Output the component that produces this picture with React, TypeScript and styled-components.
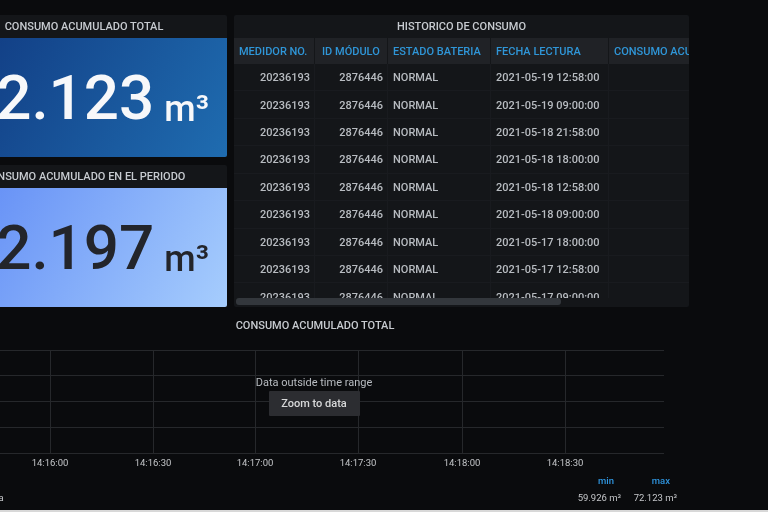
import styled, { createGlobalStyle } from "styled-components";

const GlobalStyle = createGlobalStyle`
  html, body {
    margin: 0;
    height: 100%;
    overflow: hidden;
    background: #d8d8d8;
  }
  body {
    font-family: Roboto, "Liberation Sans", sans-serif;
    color: #c4c6c9;
  }
`;

const Page = styled.div`
  width: 768px;
  height: 510px;
  overflow: hidden;
  background: #0a0b0d;
  filter: blur(0.5px);
`;

const Dashboard = styled.div`
  width: 748px;
  margin-left: -59px;
  padding-top: 15px;
  display: grid;
  grid-template-columns: 286px 455px;
  column-gap: 7px;
`;

const LeftColumn = styled.div`
  display: flex;
  flex-direction: column;
  gap: 8px;
`;

const Panel = styled.section`
  background: #141619;
  border-radius: 2px;
  overflow: hidden;
`;

const PanelTitle = styled.h2`
  margin: 0;
  height: 23px;
  line-height: 23px;
  text-align: center;
  font-size: 11px;
  font-weight: 500;
  color: #c7cbd0;
  white-space: nowrap;
`;

const Stat = styled.div<{ $light?: boolean }>`
  height: 119px;
  display: flex;
  align-items: center;
  justify-content: flex-end;
  padding-right: 18px;
  color: ${(p) => (p.$light ? "#23252b" : "#f7f8fa")};
  background: ${(p) =>
    p.$light
      ? "linear-gradient(120deg, #5d88f5, #a6cdfd)"
      : "linear-gradient(120deg, #10387f, #1f6cb0)"};
`;

const StatValue = styled.div`
  white-space: nowrap;
  font-size: 62px;
  font-weight: 500;
  line-height: 1;
`;

const Unit = styled.span`
  font-size: 36px;
  margin-left: 10px;
  vertical-align: -2px;
`;

const TablePanel = styled(Panel)`
  height: 292px;
  position: relative;
`;

const Table = styled.div`
  height: 260px;
  overflow: hidden;
`;

const Row = styled.div<{ $head?: boolean }>`
  display: grid;
  grid-template-columns: 81px 73px 103px 118px 140px;
  height: ${(p) => (p.$head ? "26px" : "27.43px")};
  background: ${(p) => (p.$head ? "#202226" : "transparent")};
  border-bottom: ${(p) => (p.$head ? "none" : "1px solid #191b1f")};
  box-sizing: border-box;
`;

const HeadCell = styled.div<{ $indent?: number }>`
  display: flex;
  align-items: center;
  padding-left: ${(p) => p.$indent ?? 5}px;
  font-size: 11px;
  font-weight: 500;
  color: #2f96d8;
  white-space: nowrap;
  overflow: hidden;
  border-right: 1px solid #141619;
`;

const Cell = styled.div<{ $right?: boolean }>`
  display: flex;
  align-items: center;
  justify-content: ${(p) => (p.$right ? "flex-end" : "flex-start")};
  padding: 1px ${(p) => (p.$right ? "4px" : "5px")} 0 5px;
  font-size: 11px;
  font-weight: 500;
  color: #b8bcc1;
  white-space: nowrap;
  border-right: 1px solid #191b1f;
`;

const ScrollThumb = styled.div`
  position: absolute;
  left: 2px;
  bottom: 2px;
  width: 325px;
  height: 7px;
  border-radius: 3px;
  background: #33373c;
`;

const ChartPanel = styled.section`
  grid-column: 1 / -1;
  margin-top: 7px;
`;

const ChartTitle = styled(PanelTitle)`
  margin-bottom: 13px;
`;

const PlotArea = styled.div`
  position: relative;
  height: 104px;
  width: 723px;
`;

const Grid = styled.svg`
  display: block;
`;

const Overlay = styled.div`
  position: absolute;
  left: 373px;
  top: 27px;
  width: 0;
  display: flex;
  flex-direction: column;
  align-items: center;
`;

const OverlayText = styled.div`
  font-size: 11px;
  color: #b8bcc1;
  white-space: nowrap;
  line-height: 12px;
`;

const ZoomButton = styled.button`
  flex: none;
  width: 91px;
  height: 25px;
  margin-top: 2px;
  border: none;
  border-radius: 1px;
  background: #2c2d31;
  color: #d8d9da;
  font-family: inherit;
  font-size: 11px;
  font-weight: 500;
`;

const Ticks = styled.div`
  position: relative;
  height: 14px;
  margin-top: 3px;
`;

const Tick = styled.span`
  position: absolute;
  top: 0;
  transform: translateX(-50%);
  font-size: 9.5px;
  color: #c4c6c9;
`;

const Legend = styled.div`
  display: grid;
  grid-template-columns: 1fr 56px 56px;
  width: 736px;
  margin-top: 1px;
  font-size: 9.5px;
  line-height: 17px;
`;

const LegendName = styled.span`
  padding-left: 31px;
`;

const LegendHead = styled.span`
  text-align: right;
  color: #2f96e0;
  font-weight: 500;
  padding-right: 7px;
`;

const LegendValue = styled.span`
  text-align: right;
  white-space: nowrap;
`;

const Spacer = styled.span``;

const rows = [
  "2021-05-19 12:58:00",
  "2021-05-19 09:00:00",
  "2021-05-18 21:58:00",
  "2021-05-18 18:00:00",
  "2021-05-18 12:58:00",
  "2021-05-18 09:00:00",
  "2021-05-17 18:00:00",
  "2021-05-17 12:58:00",
  "2021-05-17 09:00:00",
];

const gridX = [109, 212, 314, 417, 521, 624];
const gridY = [0.5, 25.5, 51.5, 77.5, 103.5];
const ticks = [
  { x: 109, label: "14:16:00" },
  { x: 212, label: "14:16:30" },
  { x: 314, label: "14:17:00" },
  { x: 417, label: "14:17:30" },
  { x: 521, label: "14:18:00" },
  { x: 624, label: "14:18:30" },
];

const App = () => {
  return (
    <Page>
      <GlobalStyle />
      <Dashboard>
        <LeftColumn>
          <Panel>
            <PanelTitle>CONSUMO ACUMULADO TOTAL</PanelTitle>
            <Stat>
              <StatValue>
                72.123<Unit>m³</Unit>
              </StatValue>
            </Stat>
          </Panel>
          <Panel>
            <PanelTitle>CONSUMO ACUMULADO EN EL PERIODO</PanelTitle>
            <Stat $light>
              <StatValue>
                12.197<Unit>m³</Unit>
              </StatValue>
            </Stat>
          </Panel>
        </LeftColumn>
        <TablePanel>
          <PanelTitle>HISTORICO DE CONSUMO</PanelTitle>
          <Table>
            <Row $head>
              <HeadCell>MEDIDOR NO.</HeadCell>
              <HeadCell $indent={7}>ID MÓDULO</HeadCell>
              <HeadCell>ESTADO BATERIA</HeadCell>
              <HeadCell>FECHA LECTURA</HeadCell>
              <HeadCell>CONSUMO ACUMULADO</HeadCell>
            </Row>
            {rows.map((date) => (
              <Row key={date}>
                <Cell $right>20236193</Cell>
                <Cell $right>2876446</Cell>
                <Cell>NORMAL</Cell>
                <Cell>{date}</Cell>
                <Cell />
              </Row>
            ))}
          </Table>
          <ScrollThumb />
        </TablePanel>
        <ChartPanel>
          <ChartTitle>CONSUMO ACUMULADO TOTAL</ChartTitle>
          <PlotArea>
            <Grid width="723" height="104">
              {gridY.map((y) => (
                <line key={y} x1="0" x2="723" y1={y} y2={y} stroke="#26282b" />
              ))}
              {gridX.map((x) => (
                <line key={x} x1={x + 0.5} x2={x + 0.5} y1="0" y2="104" stroke="#26282b" />
              ))}
            </Grid>
            <Overlay>
              <OverlayText>Data outside time range</OverlayText>
              <ZoomButton>Zoom to data</ZoomButton>
            </Overlay>
          </PlotArea>
          <Ticks>
            {ticks.map((t) => (
              <Tick key={t.label} style={{ left: t.x }}>
                {t.label}
              </Tick>
            ))}
          </Ticks>
          <Legend>
            <Spacer />
            <LegendHead>min</LegendHead>
            <LegendHead>max</LegendHead>
            <LegendName>Lectura</LegendName>
            <LegendValue>59.926 m³</LegendValue>
            <LegendValue>72.123 m³</LegendValue>
          </Legend>
        </ChartPanel>
      </Dashboard>
    </Page>
  );
};

export default App;
